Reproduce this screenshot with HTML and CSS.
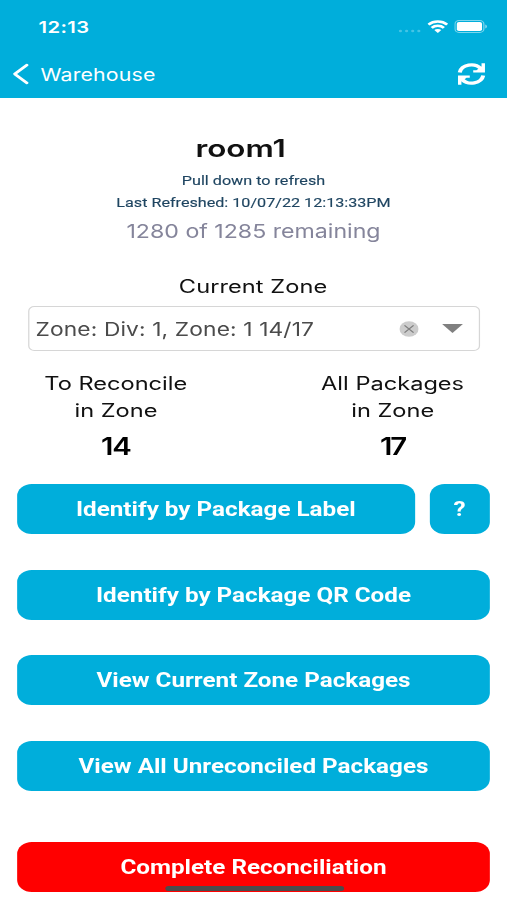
FILE: index.html
```
<!DOCTYPE html>
<html lang="en">
<head>
<meta charset="utf-8">
<title>Warehouse</title>
<link rel="stylesheet" href="styles.css">
</head>
<body>
<div class="screen">
  <header class="header">
    <div class="status">
      <span class="time">12:13</span>
      <div class="status-icons">
        <svg class="signal" width="20" height="4" viewBox="0 0 20 4"><g fill="#45c4e5"><circle cx="2" cy="2" r="1.3"/><circle cx="7" cy="2" r="1.3"/><circle cx="12" cy="2" r="1.3"/><circle cx="17" cy="2" r="1.3"/></g></svg>
        <svg class="wifi" width="17" height="13" viewBox="0 0 16 12"><g fill="none" stroke="#fff" stroke-width="2.3"><path d="M.8 4.3a10.3 10.3 0 0 1 14.4 0"/><path d="M3.3 7.3a6.7 6.7 0 0 1 9.4 0"/></g><path d="M8 12 5.3 9.4a3.8 3.8 0 0 1 5.4 0z" fill="#fff"/></svg>
        <svg class="battery" width="27" height="13" viewBox="0 0 27 13"><rect x=".5" y=".5" width="23.6" height="12" rx="3.4" fill="none" stroke="#7fd6ed"/><rect x="2" y="2" width="20.6" height="9" rx="1.8" fill="#fff"/><path d="M25.2 4.5q1.5.6 1.5 2t-1.5 2z" fill="#7fd6ed"/></svg>
      </div>
    </div>
    <div class="nav">
      <svg class="back" width="14" height="22" viewBox="0 0 14 22"><path d="M12 2 2 11l10 9" fill="none" stroke="#fff" stroke-width="2.5" stroke-linecap="round" stroke-linejoin="round"/></svg>
      <span class="nav-title">Warehouse</span>
      <svg class="refresh" width="24" height="24" viewBox="0 0 24 24"><g fill="none" stroke="#fff" stroke-width="3.3"><path d="M2.4 10.5A9.6 9 0 0 1 19.6 6.6"/><path d="M21.6 13.5A9.6 9 0 0 1 4.4 17.4"/></g><path d="M23 1.2v9.4h-9.6V8.2h2.6l4.2-3.6V1.2zM1 22.8v-9.4h9.6v2.4H8l-4.2 3.6v3.4z" fill="#fff"/></svg>
    </div>
  </header>
  <main class="content">
    <h1 class="room"><span class="wide">room1</span></h1>
    <p class="hint">Pull down to refresh</p>
    <p class="hint">Last Refreshed: 10/07/22 12:13:33PM</p>
    <p class="remaining">1280 of 1285 remaining</p>
    <div class="zone-label"><span class="wide">Current Zone</span></div>
    <div class="select">
      <span class="select-value">Zone: Div: 1, Zone: 1 14/17</span>
      <svg class="clear" width="16" height="16" viewBox="0 0 16 16"><circle cx="8" cy="8" r="7.8" fill="#ccc"/><path d="m4.3 4.3 7.4 7.4m0-7.4-7.4 7.4" stroke="#808080" stroke-width="1.2"/></svg>
      <svg class="caret" width="17" height="9" viewBox="0 0 17 9"><path d="M0 0h17L8.5 9z" fill="#808080"/></svg>
    </div>
    <div class="stats">
      <div class="stat"><div><span class="wide">To Reconcile</span></div><div><span class="wide">in Zone</span></div><div class="count">14</div></div>
      <div class="stat"><div><span class="wide">All Packages</span></div><div><span class="wide">in Zone</span></div><div class="count seventeen">17</div></div>
    </div>
    <div class="actions">
      <div class="row"><button class="btn">Identify by Package Label</button><button class="btn help">?</button></div>
      <button class="btn">Identify by Package QR Code</button>
      <button class="btn">View Current Zone Packages</button>
      <button class="btn">View All Unreconciled Packages</button>
      <button class="btn complete">Complete Reconciliation</button>
    </div>
  </main>
  <div class="home-bar"></div>
</div>
</body>
</html>
```
FILE: styles.css
```
* { box-sizing: border-box; margin: 0; padding: 0; }
html, body { width: 507px; height: 900px; overflow: hidden; background: #fff; }

/* A 414px wide phone layout, widened to fill the window */
.screen {
  position: relative;
  width: 414px;
  height: 900px;
  transform: scaleX(1.22464);
  transform-origin: 0 0;
  font-family: Inter, "Liberation Sans", sans-serif;
  color: #111;
}
svg { display: block; flex: none; }
.wide { display: inline-block; transform: scaleX(1.07); white-space: nowrap; }

.header { height: 98px; background: #00aedb; color: #fff; }
.status { display: flex; justify-content: space-between; height: 53px; padding: 0 16px 0 31.5px; align-items: center; }
.time { font-size: 16.5px; font-weight: 600; letter-spacing: .3px; }
.status-icons { display: flex; align-items: center; }
.signal { margin: 8px 4px 0 0; }
.wifi { margin-right: 5.5px; }
.nav { display: flex; align-items: center; height: 42px; padding: 0 17px 0 10px; }
.nav-title { flex: 1; margin-left: 9px; font-size: 17.4px; letter-spacing: .15px; }

.content { padding: 37px 14px 0 14px; text-align: center; }
.room { padding-right: 21px; font-size: 24px; font-weight: 600; line-height: 28px; letter-spacing: 0; margin-bottom: 7px; }
.hint { font-family: Roboto, sans-serif; font-size: 13.2px; line-height: 22px; color: #1f4561; -webkit-text-stroke: .15px #1f4561; }
.remaining { margin-top: 5px; font-size: 18.9px; line-height: 26px; color: #85859b; }
.zone-label { margin-top: 29px; font-size: 18px; line-height: 26px; letter-spacing: .05px; }
.select {
  display: flex; align-items: center;
  height: 45px; margin: 6px 8.5px 0 9px; padding: 0 12.5px 0 5px;
  border: 1px solid #d6d6d6; border-radius: 5px;
}
.select-value { flex: 1; text-align: left; font-size: 18.6px; letter-spacing: .1px; color: #4b4b4b; white-space: nowrap; }
.clear { margin-right: 19px; }
.stats { display: flex; justify-content: space-between; margin-top: 20px; padding: 0 8px 0 9px; }
.stat { width: 143px; font-size: 18px; line-height: 26.5px; }
.count { margin-top: 8px; font-size: 24px; line-height: 30px; font-weight: 600; letter-spacing: -1px; color: #000; }
.seventeen { letter-spacing: -1.8px; }

.actions { display: flex; flex-direction: column; gap: 35.7px; margin-top: 22px; }
.row { display: flex; gap: 12px; }
.btn {
  flex: 1 0 auto; height: 50px; padding-top: 1px; border: 0; border-radius: 12px;
  background: #00aedb; color: #fff;
  font: 700 19.8px/49px Roboto, sans-serif;
}
.help { flex: 0 0 49.5px; }
.complete { margin-top: 15.2px; background: #f00; }
.home-bar { position: absolute; left: 134.5px; top: 886px; width: 146.5px; height: 5px; border-radius: 3px; background: #4b4b4b; }
```
